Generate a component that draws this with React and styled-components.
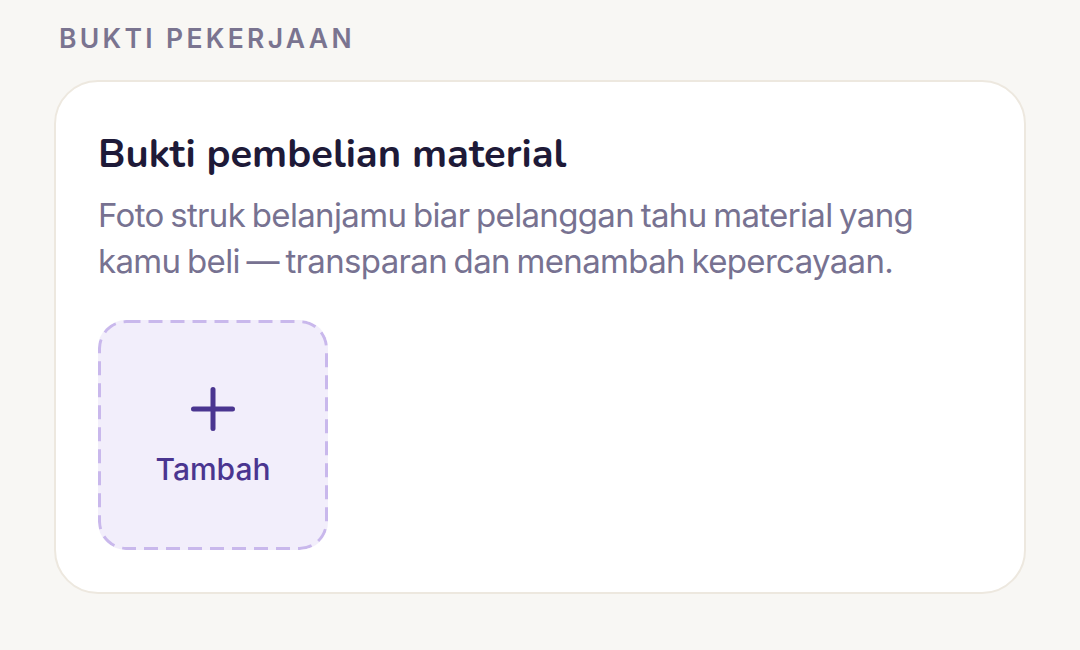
import React from "react";
import styled, { createGlobalStyle } from "styled-components";

const GlobalStyle = createGlobalStyle`
  html, body {
    margin: 0;
    padding: 0;
    background: #f8f7f4;
  }
  body {
    font-family: "Inter", "Liberation Sans", sans-serif;
    -webkit-font-smoothing: antialiased;
  }
`;

const Page = styled.main`
  padding: 20px 54px 40px;
  display: flex;
  flex-direction: column;
  gap: 24px;
`;

const SectionLabel = styled.h2`
  margin: 0 0 0 5px;
  font-family: "Inter", "Liberation Sans", sans-serif;
  font-size: 26.5px;
  line-height: 36px;
  font-weight: 600;
  letter-spacing: 0.125em;
  text-transform: uppercase;
  color: #7a7490;
`;

const Card = styled.section`
  background: #ffffff;
  border: 2px solid #ede8df;
  border-radius: 44px;
  padding: 46px 42px 42px;
  display: flex;
  flex-direction: column;
  align-items: flex-start;
`;

const Title = styled.h3`
  margin: 0;
  font-family: "Nunito", "Lato", "Noto Sans", sans-serif;
  font-size: 40px;
  line-height: 52px;
  font-weight: 700;
  color: #1e1a38;
`;

const Description = styled.p`
  margin: 12px 0 0;
  max-width: 860px;
  font-family: "Inter", "Liberation Sans", sans-serif;
  font-size: 33px;
  line-height: 46px;
  font-weight: 400;
  letter-spacing: -0.02em;
  word-spacing: -2px;
  color: #777291;
`;

const dashedBorder = encodeURIComponent(
  `<svg xmlns="http://www.w3.org/2000/svg" width="230" height="230"><rect x="1.5" y="1.5" width="227" height="227" rx="27" ry="27" fill="none" stroke="#c9b8ec" stroke-width="3" stroke-dasharray="14 8"/></svg>`
);

const AddTile = styled.button`
  margin-top: 36px;
  width: 230px;
  height: 230px;
  box-sizing: border-box;
  border: none;
  border-radius: 28px;
  background-color: #f2eefb;
  background-image: url("data:image/svg+xml,${dashedBorder}");
  background-repeat: no-repeat;
  display: flex;
  flex-direction: column;
  align-items: center;
  justify-content: flex-start;
  gap: 21px;
  padding: 67px 0 0;
  cursor: pointer;
  color: #4a3590;
`;

const TileLabel = styled.span`
  font-family: "Inter", "Liberation Sans", sans-serif;
  font-size: 30px;
  line-height: 34px;
  font-weight: 500;
  color: #4a3590;
`;

const PlusIcon = () => (
  <svg width="44" height="44" viewBox="0 0 44 44" fill="none" aria-hidden="true">
    <path
      d="M22 2.5v39M2.5 22h39"
      stroke="currentColor"
      strokeWidth="5"
      strokeLinecap="round"
    />
  </svg>
);

export default function App() {
  return (
    <>
      <GlobalStyle />
      <Page>
        <SectionLabel>Bukti pekerjaan</SectionLabel>
        <Card>
          <Title>Bukti pembelian material</Title>
          <Description>
            Foto struk belanjamu biar pelanggan tahu material yang kamu beli — transparan dan menambah kepercayaan.
          </Description>
          <AddTile type="button">
            <PlusIcon />
            <TileLabel>Tambah</TileLabel>
          </AddTile>
        </Card>
      </Page>
    </>
  );
}
